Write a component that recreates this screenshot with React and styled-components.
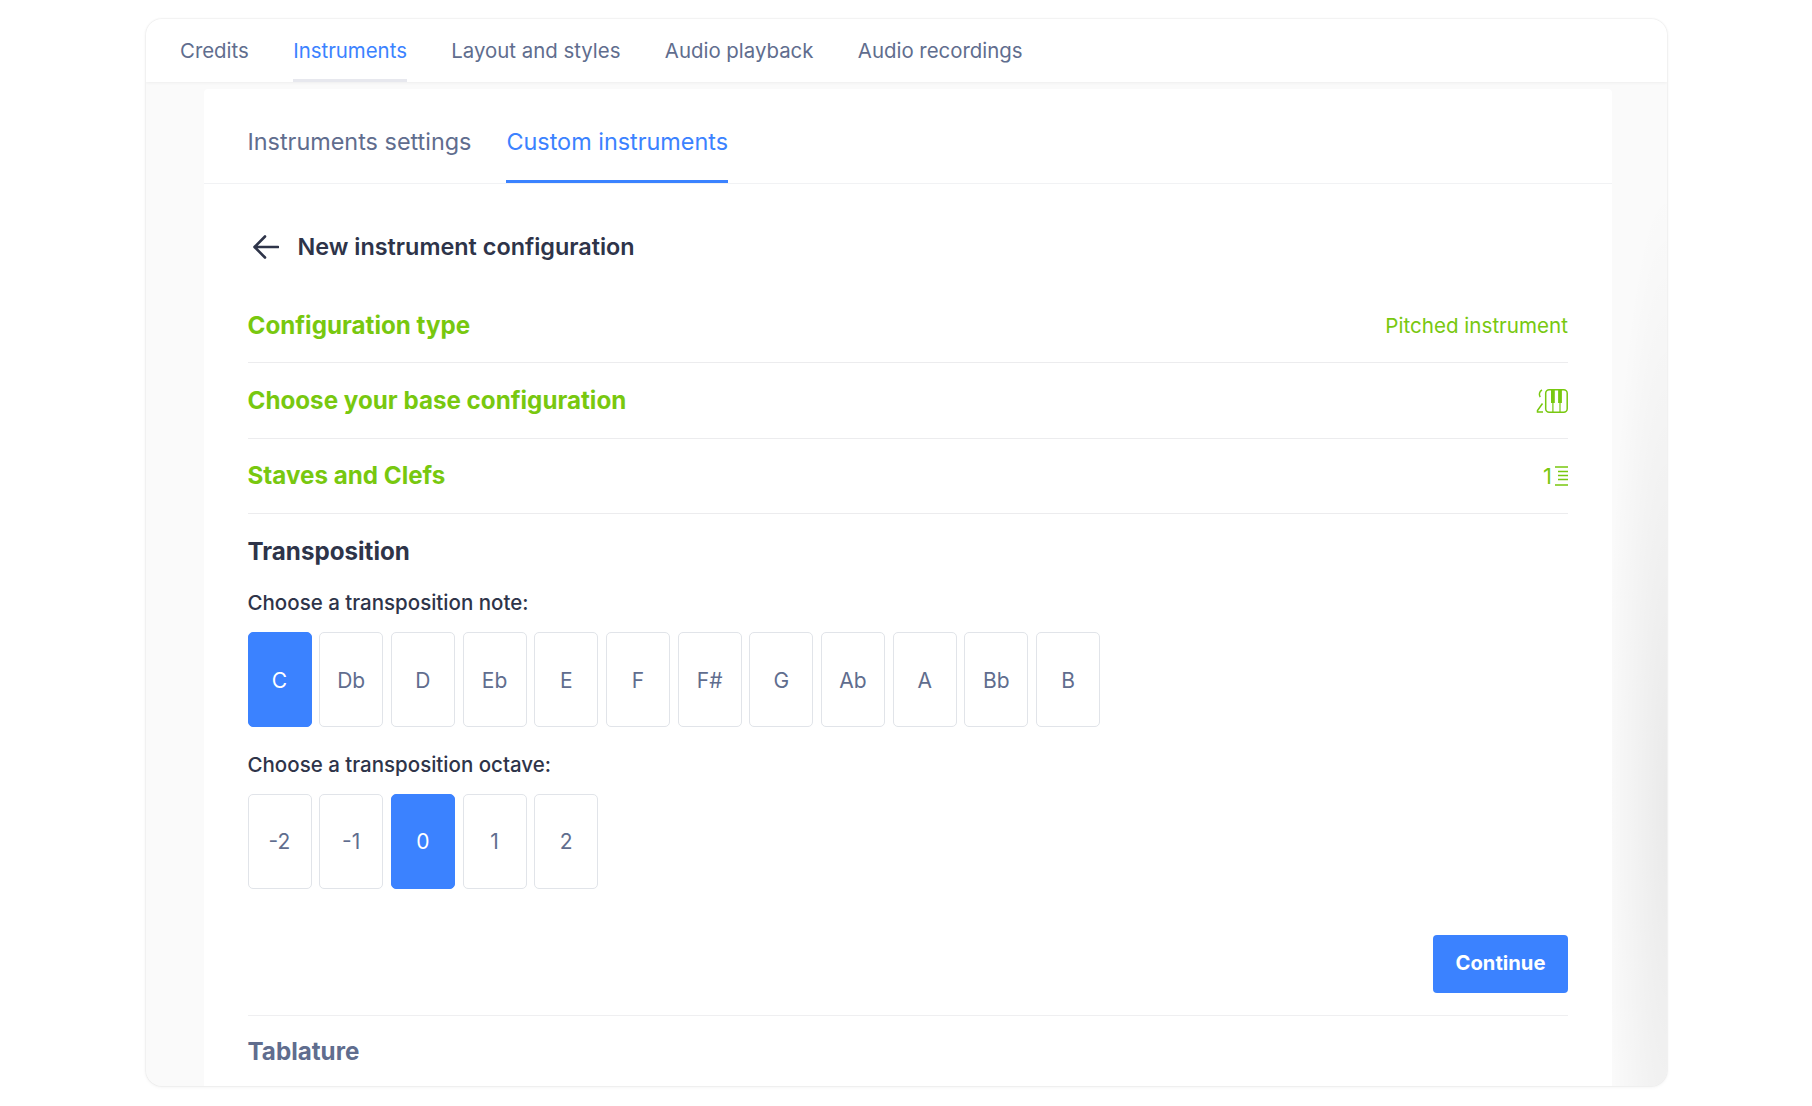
import React from "react";
import styled, { createGlobalStyle } from "styled-components";

const Global = createGlobalStyle`
  html, body { margin: 0; padding: 0; background: #fff; }
  body { font-family: Inter, "Liberation Sans", sans-serif; -webkit-font-smoothing: antialiased; }
`;

const Page = styled.div`
  width: 1812px;
  height: 1106px;
  padding: 19px 145px 20px 146px;
  box-sizing: border-box;
`;

const Card = styled.div`
  height: 100%;
  display: flex;
  flex-direction: column;
  border-radius: 16px;
  overflow: hidden;
  background: #fafafa;
  box-shadow: 0 0 2px rgba(0, 0, 0, 0.14), 0 1px 4px rgba(0, 0, 0, 0.05);
`;

const TopBar = styled.nav`
  flex: none;
  height: 63px;
  display: flex;
  gap: 44.4px;
  padding-left: 34px;
  background: #fff;
  box-shadow: 0 1px 3px rgba(0, 0, 0, 0.05);
  position: relative;
`;

const TopTab = styled.div`
  height: 100%;
  box-sizing: border-box;
  display: flex;
  align-items: center;
  padding-top: 3px;
  font-size: 20.4px;
  color: ${(p) => (p.$active ? "#3b82ff" : "#606d8e")};
  border-bottom: 3px solid ${(p) => (p.$active ? "#e7e8ee" : "transparent")};
`;

const Content = styled.div`
  flex: 1;
  min-height: 0;
  padding: 7px 55px 0 58px;
  background: radial-gradient(ellipse 60px 620px at 100% 72%, rgba(0, 0, 0, 0.065), transparent), #fafafa;
`;

const Panel = styled.section`
  height: 100%;
  background: #fff;
  border-radius: 4px 4px 0 0;
`;

const PanelTabs = styled.div`
  height: 94px;
  display: flex;
  gap: 35px;
  padding: 0 44px 0 43.5px;
  border-bottom: 1px solid #f1f2f4;
`;

const PanelTab = styled.div`
  height: 100%;
  box-sizing: border-box;
  display: flex;
  align-items: center;
  padding-top: 13px;
  font-size: 23.4px;
  color: ${(p) => (p.$active ? "#3b82ff" : "#606d8e")};
  border-bottom: 3px solid ${(p) => (p.$active ? "#3b82ff" : "transparent")};
`;

const Body = styled.div`
  padding: 0 44px 0 43.5px;
`;

const BackRow = styled.div`
  height: 104px;
  display: flex;
  align-items: center;
  gap: 19px;
  padding: 21px 0 0 5px;
  box-sizing: border-box;
`;

const BackTitle = styled.h2`
  margin: 0;
  font-size: 23.4px;
  font-weight: 600;
  color: #2e3449;
`;

const Row = styled.div`
  height: 75.4px;
  display: flex;
  align-items: center;
  justify-content: space-between;
  border-bottom: 1px solid #ececee;
  box-sizing: border-box;
`;

const RowTitle = styled.h3`
  margin: 0;
  font-size: 24.2px;
  font-weight: 700;
  color: #78c80f;
`;

const RowValue = styled.span`
  font-size: 20.6px;
  color: #78c80f;
`;

const StaveValue = styled.span`
  display: flex;
  align-items: center;
  gap: 3px;
  font-size: 22px;
  color: #78c80f;
`;

const SectionTitle = styled.h3`
  margin: 0;
  height: 75px;
  display: flex;
  align-items: center;
  font-size: 24.2px;
  font-weight: 700;
  color: #2e3449;
`;

const Label = styled.div`
  font-size: 20.5px;
  font-weight: 500;
  line-height: 28px;
  color: #2e3449;
`;

const NoteLabel = styled(Label)`
  padding-bottom: 15px;
`;

const OctaveLabel = styled(Label)`
  padding: 23.5px 0 15px;
`;

const Choices = styled.div`
  display: flex;
  gap: 7.7px;
`;

const Choice = styled.div`
  width: 64px;
  height: 95px;
  box-sizing: border-box;
  display: flex;
  align-items: center;
  justify-content: center;
  border-radius: 5px;
  font-size: 21px;
  padding-top: 1px;
  border: 1px solid ${(p) => (p.$active ? "#3b82ff" : "#e1e4e9")};
  background: ${(p) => (p.$active ? "#3b82ff" : "#fff")};
  color: ${(p) => (p.$active ? "#fff" : "#606d8e")};
`;

const Actions = styled.div`
  display: flex;
  justify-content: flex-end;
  padding: 46px 0 22px;
  border-bottom: 1px solid #efeff1;
`;

const Primary = styled.div`
  width: 135px;
  height: 58px;
  padding-bottom: 2px;
  box-sizing: border-box;
  border-radius: 4px;
  background: #3b82ff;
  color: #fff;
  font-size: 20.2px;
  font-weight: 700;
  display: flex;
  align-items: center;
  justify-content: center;
`;

const Tablature = styled.h3`
  margin: 0;
  height: 72px;
  display: flex;
  align-items: center;
  font-size: 24.2px;
  font-weight: 700;
  color: #606d8e;
`;

const BackIcon = () => (
  <svg width="26" height="26" viewBox="0 0 26 26" fill="none" stroke="#2e3449" strokeWidth="2.6" strokeLinecap="round" strokeLinejoin="round">
    <path d="M25 13H2M12 2.5 1.5 13 12 23.5" />
  </svg>
);

const PianoIcon = () => (
  <svg width="32" height="24" viewBox="0 0 32 24" fill="none" stroke="#78c80f">
    <path d="M6 1C3.4 2.4 2.6 5.6 4.2 8.2M6.5 14.5 1.5 21.5V23H7" strokeWidth="1.5" />
    <rect x="9.7" y="0.8" width="21.5" height="22.4" rx="3.5" strokeWidth="1.5" />
    <path d="M16.9 1V23M24 1V23" strokeWidth="1.2" />
    <path d="M16.9 1V14M24 1V14" strokeWidth="3.8" />
  </svg>
);

const StavesIcon = () => (
  <svg width="13" height="20" viewBox="0 0 13 20" fill="none" stroke="#78c80f" strokeWidth="1.5">
    <path d="M0 1H13M3 5.5H13M3 9.5H13M3 13.5H13M0 19H13" />
  </svg>
);

const NOTES = ["C", "Db", "D", "Eb", "E", "F", "F#", "G", "Ab", "A", "Bb", "B"];
const OCTAVES = ["-2", "-1", "0", "1", "2"];
const TOP = ["Credits", "Instruments", "Layout and styles", "Audio playback", "Audio recordings"];

export default function App() {
  return (
    <>
      <Global />
      <Page>
        <Card>
          <TopBar>
            {TOP.map((t) => (
              <TopTab key={t} $active={t === "Instruments"}>{t}</TopTab>
            ))}
          </TopBar>
          <Content>
            <Panel>
              <PanelTabs>
                <PanelTab>Instruments settings</PanelTab>
                <PanelTab $active>Custom instruments</PanelTab>
              </PanelTabs>
              <Body>
                <BackRow>
                  <BackIcon />
                  <BackTitle>New instrument configuration</BackTitle>
                </BackRow>
                <Row>
                  <RowTitle>Configuration type</RowTitle>
                  <RowValue>Pitched instrument</RowValue>
                </Row>
                <Row>
                  <RowTitle>Choose your base configuration</RowTitle>
                  <PianoIcon />
                </Row>
                <Row>
                  <RowTitle>Staves and Clefs</RowTitle>
                  <StaveValue>1<StavesIcon /></StaveValue>
                </Row>
                <SectionTitle>Transposition</SectionTitle>
                <NoteLabel>Choose a transposition note:</NoteLabel>
                <Choices>
                  {NOTES.map((n) => (
                    <Choice key={n} $active={n === "C"}>{n}</Choice>
                  ))}
                </Choices>
                <OctaveLabel>Choose a transposition octave:</OctaveLabel>
                <Choices>
                  {OCTAVES.map((n) => (
                    <Choice key={n} $active={n === "0"}>{n}</Choice>
                  ))}
                </Choices>
                <Actions>
                  <Primary>Continue</Primary>
                </Actions>
                <Tablature>Tablature</Tablature>
              </Body>
            </Panel>
          </Content>
        </Card>
      </Page>
    </>
  );
}
